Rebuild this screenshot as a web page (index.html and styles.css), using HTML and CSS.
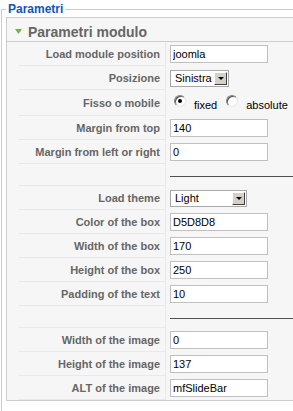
FILE: index.html
```html
<!DOCTYPE html>
<html lang="it">
<head>
<meta charset="utf-8">
<title>Parametri</title>
<link rel="stylesheet" href="styles.css">
</head>
<body>
<fieldset class="params">
  <legend class="params-legend">Parametri</legend>
  <div class="panel">
    <h3 class="panel-title"><svg class="toggler" width="7" height="5" viewBox="0 0 7 5"><path d="M0 0H7L3.5 5Z" fill="#74b04c"/></svg><span>Parametri modulo</span></h3>
    <table class="paramlist">
      <tr>
        <td class="key">Load module position</td>
        <td class="val"><input class="text" type="text" value="joomla"></td>
      </tr>
      <tr>
        <td class="key">Posizione</td>
        <td class="val"><span class="select select-sm"><span class="select-value">Sinistra</span><span class="select-btn"><span class="arrow"></span></span></span></td>
      </tr>
      <tr class="tall">
        <td class="key">Fisso o mobile</td>
        <td class="val"><span class="radios"><span class="radio checked"></span><span class="radio-label">fixed</span><span class="radio"></span><span class="radio-label">absolute</span></span></td>
      </tr>
      <tr>
        <td class="key">Margin from top</td>
        <td class="val"><input class="text" type="text" value="140"></td>
      </tr>
      <tr>
        <td class="key">Margin from left or right</td>
        <td class="val"><input class="text" type="text" value="0"></td>
      </tr>
      <tr class="sep-row">
        <td class="key"></td>
        <td class="val sep-cell"><div class="sep"></div></td>
      </tr>
      <tr>
        <td class="key">Load theme</td>
        <td class="val"><span class="select select-md"><span class="select-value">Light</span><span class="select-btn"><span class="arrow"></span></span></span></td>
      </tr>
      <tr>
        <td class="key">Color of the box</td>
        <td class="val"><input class="text" type="text" value="D5D8D8"></td>
      </tr>
      <tr>
        <td class="key">Width of the box</td>
        <td class="val"><input class="text" type="text" value="170"></td>
      </tr>
      <tr>
        <td class="key">Height of the box</td>
        <td class="val"><input class="text" type="text" value="250"></td>
      </tr>
      <tr>
        <td class="key">Padding of the text</td>
        <td class="val"><input class="text" type="text" value="10"></td>
      </tr>
      <tr class="sep-row">
        <td class="key"></td>
        <td class="val sep-cell"><div class="sep"></div></td>
      </tr>
      <tr>
        <td class="key">Width of the image</td>
        <td class="val"><input class="text" type="text" value="0"></td>
      </tr>
      <tr>
        <td class="key">Height of the image</td>
        <td class="val"><input class="text" type="text" value="137"></td>
      </tr>
      <tr>
        <td class="key">ALT of the image</td>
        <td class="val"><input class="text" type="text" value="mfSlideBar"></td>
      </tr>
    </table>
  </div>
</fieldset>
</body>
</html>
```
FILE: styles.css
```css
html, body {
  margin: 0;
  padding: 0;
  background: #fff;
  overflow: hidden;
}
body {
  font-family: "Liberation Sans", Arial, sans-serif;
  font-size: 11px;
  color: #000;
}
.params {
  width: 340px;
  height: 430px;
  box-sizing: border-box;
  margin: 2px 0 0 1px;
  padding: 1px 0 0 4px;
  border: 1px solid #cccccc;
  min-width: 0;
}
.params-legend {
  padding: 0 2px;
  margin: 0;
  font-size: 12px;
  line-height: 14px;
  font-weight: bold;
  color: #0b55c4;
}
.panel {
  border: 1px solid #cccccc;
  background: #f6f6f6;
}
.panel-title {
  margin: 0;
  height: 24px;
  box-sizing: border-box;
  border-bottom: 1px solid #cccccc;
  display: flex;
  align-items: center;
  padding: 4px 0 0 8px;
  font-size: 14px;
  font-weight: bold;
  color: #666;
}
.panel-title .toggler {
  margin-right: 6px;
  margin-top: 0;
}
.paramlist {
  border-collapse: separate;
  border-spacing: 0;
  margin-left: 12px;
  width: 320px;
}
.paramlist td {
  padding: 0;
  box-sizing: border-box;
  height: 24px;
  vertical-align: middle;
}
.paramlist tr.tall td {
  height: 26px;
}
.paramlist tr.sep-row td {
  height: 22px;
}
.key {
  width: 147px;
  padding: 0 5px 0 0 !important;
  text-align: right;
  font-weight: bold;
  color: #666;
  border-right: 1px solid #e9e9e9;
  border-bottom: 1px solid #e9e9e9;
  white-space: nowrap;
}
.val {
  padding-left: 4px !important;
}
.text {
  display: block;
  width: 98px;
  height: 18px;
  box-sizing: border-box;
  margin: 0;
  padding: 0 2px;
  border: 1px solid #c0c0c0;
  background: #fff;
  font-family: "Liberation Sans", Arial, sans-serif;
  font-size: 11px;
  color: #000;
  outline: none;
}
.select {
  display: flex;
  align-items: center;
  height: 17px;
  box-sizing: border-box;
  border: 1px solid #a8a8a8;
  background: #fff;
  padding: 1px;
}
.select-sm { width: 59px; }
.select-md { width: 77px; }
.select-value {
  flex: 1;
  padding-left: 3px;
  font-size: 11px;
  line-height: 13px;
}
.select-btn {
  width: 13px;
  height: 13px;
  box-sizing: border-box;
  background: #d4d0c8;
  border: 1px solid;
  border-color: #fff #404040 #404040 #fff;
  display: flex;
  align-items: center;
  justify-content: center;
}
.arrow {
  width: 0;
  height: 0;
  border-left: 3px solid transparent;
  border-right: 3px solid transparent;
  border-top: 3px solid #000;
  margin-top: 1px;
}
.radios {
  display: flex;
  align-items: center;
  padding-left: 4px;
}
.radio {
  width: 12px;
  height: 12px;
  box-sizing: border-box;
  border-radius: 50%;
  border: 1px solid;
  border-color: #808080 #e8e8e8 #e8e8e8 #808080;
  box-shadow: inset 1px 1px 0 #505050;
  background: #fff;
  margin-bottom: 4px;
  display: flex;
  align-items: center;
  justify-content: center;
}
.radio.checked::after {
  content: "";
  width: 4px;
  height: 4px;
  border-radius: 50%;
  background: #000;
}
.radio-label {
  margin-left: 8px;
  margin-right: 9px;
  font-size: 11px;
  margin-top: 3px;
}
.sep-cell {
  vertical-align: top !important;
  padding-top: 12px !important;
}
.sep {
  height: 0;
  border-top: 1px solid #505050;
}
```
